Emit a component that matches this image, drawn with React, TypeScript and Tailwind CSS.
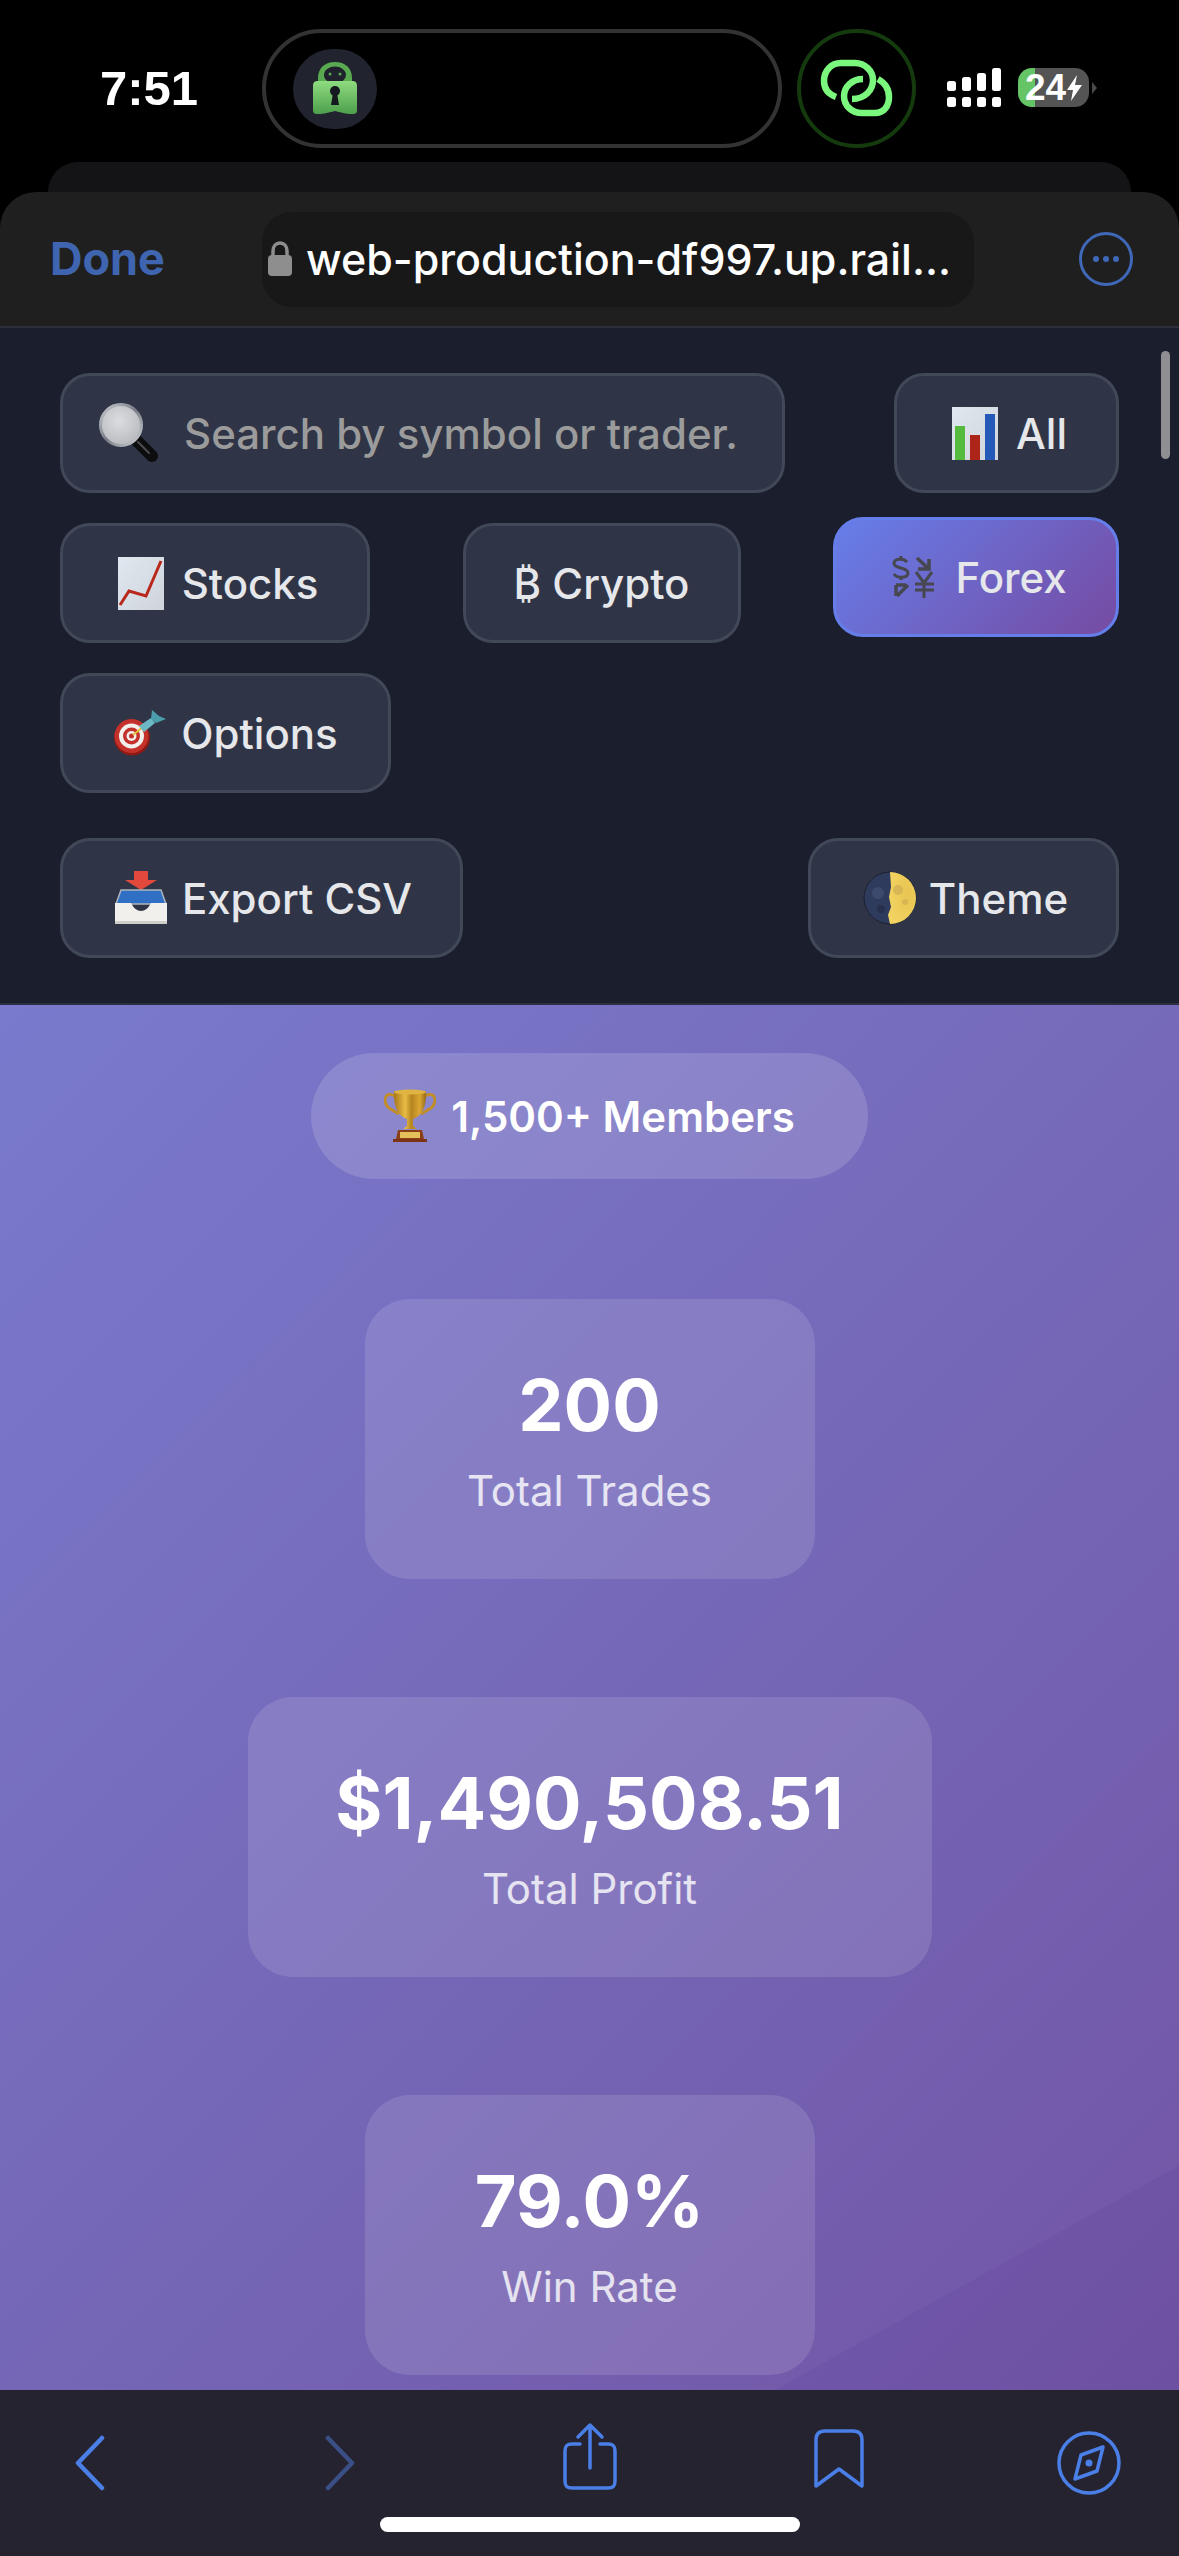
import React from "react";

const Magnifier = () => (
  <svg width="60" height="60" viewBox="0 0 60 60">
    <defs>
      <radialGradient id="lens" cx="0.45" cy="0.4" r="0.7"><stop offset="0" stopColor="#dcdde0" /><stop offset="1" stopColor="#b4b6bb" /></radialGradient>
      <linearGradient id="rim" x1="0" y1="0" x2="1" y2="1"><stop offset="0" stopColor="#c9ccd2" /><stop offset="0.5" stopColor="#777b84" /><stop offset="1" stopColor="#d5d7da" /></linearGradient>
    </defs>
    <line x1="38" y1="38" x2="53" y2="53" stroke="#0d0d0f" strokeWidth="12" strokeLinecap="round" />
    <line x1="39" y1="39" x2="50" y2="50" stroke="#4a4c52" strokeWidth="2" strokeLinecap="round" />
    <circle cx="22" cy="22" r="20.5" fill="url(#lens)" stroke="url(#rim)" strokeWidth="3" />
  </svg>
);

const ChartPaper = ({ children }: { children: React.ReactNode }) => (
  <svg width="46" height="53" viewBox="0 0 46 53">
    <defs>
      <linearGradient id="paper" x1="0" y1="0" x2="1" y2="1"><stop offset="0" stopColor="#dfe8f0" /><stop offset="1" stopColor="#cfd4da" /></linearGradient>
    </defs>
    <rect width="46" height="53" fill="url(#paper)" />
    {children}
  </svg>
);

const BarChart = () => (
  <ChartPaper>
    <rect x="3" y="19" width="10" height="34" fill="#55bb3e" />
    <rect x="18" y="28" width="10" height="25" fill="#ad2418" />
    <rect x="33" y="7" width="10" height="46" fill="#2459b8" />
  </ChartPaper>
);

const LineChart = () => (
  <ChartPaper>
    <path d="M2 48 L11 34 L28 39 L43 4" fill="none" stroke="#b8281b" strokeWidth="3" />
  </ChartPaper>
);

const ForexIcon = () => (
  <svg width="44" height="42" viewBox="0 0 44 42" fill="none" stroke="#47474f">
    <path d="M16 6 C13 2 3 2 3 7.500 C3 13 17 11 17 17 C17 22.500 6 22.500 3 18" strokeWidth="3" />
    <path d="M10 0 V4 M10 20 V24" strokeWidth="3" />
    <path d="M26 2 L38 13 M38 3 V13 H27" strokeWidth="3.500" />
    <path d="M6 40 L17 29 M5 29 H15 M5 29 V40" strokeWidth="3.500" />
    <path d="M25 16 L33 27 L41 16 M33 27 V42 M24 28 H43 M24 34 H43" strokeWidth="3" />
  </svg>
);

const Target = () => (
  <svg width="54" height="46" viewBox="0 0 54 46">
    <ellipse cx="19" cy="28" rx="18" ry="17.500" fill="#8f1a15" />
    <circle cx="18.500" cy="26" r="17" fill="#c4302a" />
    <circle cx="18.500" cy="26" r="12.500" fill="#f2efec" />
    <circle cx="18.500" cy="26" r="8.500" fill="#c4302a" />
    <circle cx="18.500" cy="26" r="5" fill="#f2efec" />
    <circle cx="18.500" cy="26" r="2.500" fill="#c4302a" />
    <path d="M20 25 L30 17" stroke="#e3c23a" strokeWidth="2" />
    <path d="M26 16 L38 8 L42 13 L31 22 Z" fill="#6cb8c4" />
    <path d="M38 9 L39 0 L46 6 L53 9 L43 13 Z" fill="#4b9dab" />
  </svg>
);

const Inbox = () => (
  <svg width="54" height="54" viewBox="0 0 54 54">
    <path d="M20 0 H34 V9 H43 L27 19 L11 9 H20 Z" fill="#e2483b" />
    <path d="M7 19 H47 L52 33 H2 Z" fill="#2f6fc4" stroke="#b0b5bb" strokeWidth="1.500" />
    <path d="M1 32 H17 Q21 40 27 40 Q33 40 37 32 H53 V52 H1 Z" fill="#f1f0ec" />
    <rect x="1" y="50" width="52" height="3" fill="#cfcfca" />
  </svg>
);

const Moon = () => (
  <svg width="54" height="54" viewBox="0 0 54 54">
    <defs>
      <radialGradient id="moonY" cx="0.7" cy="0.4" r="0.8"><stop offset="0" stopColor="#e8c552" /><stop offset="1" stopColor="#f3d463" /></radialGradient>
    </defs>
    <circle cx="27" cy="27" r="26" fill="#2f3b5c" stroke="#1c2130" strokeWidth="1" />
    <path d="M27 1 A26 26 0 0 1 27 53 L25 44 L28 36 L26 26 L28 16 Z" fill="url(#moonY)" />
    <circle cx="35" cy="19" r="5" fill="#cfae52" opacity="0.7" />
    <circle cx="42" cy="31" r="3" fill="#cfae52" opacity="0.7" />
    <circle cx="15" cy="22" r="6" fill="#3c4a6e" />
    <circle cx="18" cy="38" r="4" fill="#26304c" />
  </svg>
);

const Trophy = () => (
  <svg width="52" height="56" viewBox="0 0 52 56">
    <defs>
      <linearGradient id="gold" x1="0" x2="1" y1="0" y2="0"><stop offset="0" stopColor="#a8761a" /><stop offset="0.35" stopColor="#e8bc45" /><stop offset="0.55" stopColor="#b58420" /><stop offset="0.8" stopColor="#dba832" /><stop offset="1" stopColor="#96681a" /></linearGradient>
    </defs>
    <path d="M11 8 C-1 2 -1 16 5 20 L15 26 M41 8 C53 2 53 16 47 20 L37 26" fill="none" stroke="#c08d28" strokeWidth="3" />
    <path d="M10 3 H42 C43 18 38 28 29 31 V38 L33 41 H19 L23 38 V31 C14 28 9 18 10 3 Z" fill="url(#gold)" />
    <ellipse cx="26" cy="4" rx="16" ry="2.500" fill="#e0b443" />
    <path d="M14 42 H38 L40 51 H12 Z" fill="#8a3f17" />
    <rect x="16" y="44" width="20" height="6" fill="#e5bf5a" />
    <rect x="9" y="51" width="34" height="3" fill="#7c3415" />
  </svg>
);

const PiaLogo = () => (
  <svg width="44" height="54" viewBox="0 0 44 54">
    <defs>
      <linearGradient id="pia" x1="0" x2="0" y1="0" y2="1"><stop offset="0" stopColor="#8fdc80" /><stop offset="1" stopColor="#4d9f4c" /></linearGradient>
    </defs>
    <path d="M5 22 V16 C5 6 12 0 22 0 C32 0 39 6 39 16 V22 Z" fill="#59a950" />
    <ellipse cx="22" cy="13" rx="11" ry="8.500" fill="#1f222c" />
    <circle cx="17" cy="12" r="1.500" fill="#59a950" />
    <circle cx="27" cy="12" r="1.500" fill="#59a950" />
    <path d="M0 24 C0 20 2 19 5 19 H39 C42 19 44 20 44 24 V48 C44 52 42 52 38 52 C33 52 30 51 22 49 C14 51 11 52 6 52 C2 52 0 52 0 48 Z" fill="url(#pia)" />
    <circle cx="22" cy="29" r="5" fill="#15181f" />
    <path d="M20 31 L18 43 H26 L24 31 Z" fill="#15181f" />
  </svg>
);

const ChainLogo = () => (
  <div className="flex h-[119px] w-[119px] items-center justify-center rounded-full border-[4px] border-[#143a0e]">
    <svg width="111" height="111" viewBox="4 4 111 111" fill="none" stroke="#7bf77e" strokeWidth="6.500" strokeLinecap="butt">
      <path d="M39 68 C31 65 27 59 27 52 C27 42 34 34 44 34 H58 C68 34 76 42 76 51 C76 61 68 70 55 70" />
      <path d="M66 50 C55 50 47 58 47 67 C47 77 55 84 65 84 H78 C87 84 92 77 92 68 C92 60 88 54 81 50" />
    </svg>
  </div>
);

const Signal = () => (
  <svg width="55" height="40" viewBox="0 0 55 40" fill="#fff">
    <rect x="0" y="13" width="9" height="10" rx="2.500" />
    <rect x="15" y="9" width="9" height="14" rx="2.500" />
    <rect x="30" y="5" width="9" height="18" rx="2.500" />
    <rect x="45" y="0" width="9" height="23" rx="2.500" />
    <rect x="0" y="29" width="9" height="10" rx="2.500" />
    <rect x="15" y="29" width="9" height="10" rx="2.500" />
    <rect x="30" y="29" width="9" height="10" rx="2.500" />
    <rect x="45" y="29" width="9" height="10" rx="2.500" />
  </svg>
);

const Filter = ({ w, icon, label, active, gap = "gap-[12px]", shift = "" }: { w: string; icon: React.ReactNode; label: string; active?: boolean; gap?: string; shift?: string }) => (
  <div
    className={`flex h-[120px] ${w} items-center justify-center ${gap} ${shift} rounded-[30px] border-[3px] text-[42px] font-medium ${
      active
        ? "-translate-y-[6px] border-[#667eea] bg-[linear-gradient(135deg,#667eea_0%,#764ba2_100%)] text-[#e5e7eb]"
        : "border-[#414858] bg-[#2f3546] text-[#e5e7eb]"
    }`}
  >
    {icon}
    <span>{label}</span>
  </div>
);

const Stat = ({ w, value, label }: { w: string; value: string; label: string }) => (
  <div className={`flex h-[280px] ${w} flex-col items-center justify-center rounded-[45px] bg-white/12`}>
    <div className="text-[72px] leading-[86px] font-bold text-white">{value}</div>
    <div className="mt-[17px] text-[42px] leading-[52px] text-white/80">{label}</div>
  </div>
);

export default function App() {
  return (
    <div className="relative flex h-[2556px] w-[1179px] flex-col overflow-hidden bg-black font-[Inter,sans-serif] text-white">
      {/* status bar */}
      <div className="flex h-[162px] items-start pt-[29px]">
        <div className="ml-[100px] flex h-[119px] w-[162px] items-center font-[Liberation_Sans,sans-serif] text-[49px] font-bold">7:51</div>
        <div className="flex h-[119px] w-[520px] items-center rounded-[60px] border-[4px] border-[#333333] pl-[27px]">
          <div className="flex h-[80px] w-[84px] items-center justify-center rounded-[40px] bg-[#21242e]">
            <PiaLogo />
          </div>
        </div>
        <div className="ml-[15px]"><ChainLogo /></div>
        <div className="ml-[31px] mt-[39px]"><Signal /></div>
        <div className="ml-[16px] mt-[39px] flex items-center">
          <div className="flex h-[39px] w-[71px] items-center justify-center gap-[1px] rounded-[14px] bg-[linear-gradient(90deg,#65c466_24%,#545454_24%)] font-[Liberation_Sans,sans-serif] text-[37px] leading-none font-bold">
            <span>24</span>
            <svg width="15" height="26" viewBox="0 0 15 26" fill="#fff"><path d="M10 0 L0 15 H6 L4 26 L15 10 H8 Z" /></svg>
          </div>
          <svg className="ml-[3px]" width="5" height="12" viewBox="0 0 5 12" fill="#4a4a4a"><path d="M0 0 L5 6 L0 12 Z" /></svg>
        </div>
      </div>

      {/* sheet behind */}
      <div className="mx-[48px] h-[30px] rounded-t-[30px] bg-[#141416]" />

      {/* browser header */}
      <div className="flex h-[136px] items-center rounded-t-[36px] border-b-[2px] border-[#2c2f3a] bg-[#1f1f1f] pl-[50px]">
        <div className="w-[212px] text-[45px] font-bold text-[#3f65b0]">Done</div>
        <div className="flex h-[95px] w-[712px] items-center gap-[12px] rounded-[30px] bg-[#181818] pl-[4px]">
          <svg width="28" height="36" viewBox="0 0 26 36" fill="#8e8e8e">
            <path d="M6 15 V10 C6 5 9 2 13 2 C17 2 20 5 20 10 V15" fill="none" stroke="#8e8e8e" strokeWidth="3.500" />
            <rect x="1" y="14" width="24" height="21" rx="4" />
          </svg>
          <span className="text-[43px] font-medium whitespace-nowrap text-white">web-production-df997.up.rail...</span>
        </div>
        <div className="ml-[105px] flex h-[54px] w-[54px] items-center justify-center gap-[4px] rounded-full border-[3px] border-[#3f68b8]">
          <i className="h-[6px] w-[6px] rounded-full bg-[#3f68b8]" />
          <i className="h-[6px] w-[6px] rounded-full bg-[#3f68b8]" />
          <i className="h-[6px] w-[6px] rounded-full bg-[#3f68b8]" />
        </div>
      </div>

      {/* filter panel */}
      <div className="flex h-[675px] flex-col bg-[#1a1e2d] px-[60px] pt-[45px]">
        <div className="flex justify-between">
          <div className="flex h-[120px] w-[725px] items-center gap-[25px] rounded-[30px] border-[3px] border-[#414858] bg-[#2f3546] pl-[36px] text-[42px] font-medium text-[#9b9b9b]">
            <Magnifier />
            <span className="whitespace-nowrap">Search by symbol or trader.</span>
          </div>
          <Filter w="w-[225px]" icon={<BarChart />} label="All" gap="gap-[18px]" shift="pl-[6px]" />
        </div>
        <div className="mt-[30px] flex justify-between">
          <Filter w="w-[310px]" icon={<LineChart />} label="Stocks" gap="gap-[18px]" shift="pl-[6px]" />
          <Filter w="w-[278px]" icon={null} label="₿ Crypto" />
          <Filter w="w-[286px]" icon={<ForexIcon />} label="Forex" gap="gap-[20px]" shift="pl-[6px]" active />
        </div>
        <div className="mt-[30px] flex">
          <Filter w="w-[331px]" icon={<Target />} label="Options" gap="gap-[14px]" />
        </div>
        <div className="mt-[45px] flex justify-between">
          <Filter w="w-[403px]" icon={<Inbox />} label="Export CSV" gap="gap-[14px]" shift="pl-[3px]" />
          <Filter w="w-[311px]" icon={<Moon />} label="Theme" gap="gap-[12px]" shift="pl-[4px]" />
        </div>
      </div>

      {/* stats */}
      <div className="flex flex-1 flex-col items-center border-t-[2px] border-[#2c3040] bg-[linear-gradient(151deg,rgba(255,255,255,0.03)_0%,rgba(255,255,255,0.03)_89%,transparent_89%),linear-gradient(135deg,#7576cb_0%,#6e50a2_100%)] pt-[48px]">
        <div className="flex h-[126px] w-[557px] items-center justify-center gap-[15px] rounded-[63px] bg-white/15 text-[42px] font-semibold">
          <Trophy />
          <span>1,500+ Members</span>
        </div>
        <div className="mt-[120px] flex flex-col items-center gap-[118px]">
          <Stat w="w-[450px]" value="200" label="Total Trades" />
          <Stat w="w-[684px]" value="$1,490,508.51" label="Total Profit" />
          <Stat w="w-[450px]" value="79.0%" label="Win Rate" />
        </div>
      </div>

      {/* toolbar */}
      <div className="flex h-[166px] flex-col bg-[#252330]">
        <div className="flex h-[127px] items-start justify-between px-[40px] pt-[40px] text-[#4a7fe8]">
          <div className="flex h-[66px] w-[100px] items-center justify-center">
            <svg width="32" height="56" viewBox="0 0 32 56" fill="none" stroke="currentColor" strokeWidth="4.500" strokeLinecap="round" strokeLinejoin="round"><path d="M28 3 L4 28 L28 53" /></svg>
          </div>
          <div className="flex h-[66px] w-[100px] items-center justify-center text-[#3a4f86]">
            <svg width="32" height="56" viewBox="0 0 32 56" fill="none" stroke="currentColor" strokeWidth="4.500" strokeLinecap="round" strokeLinejoin="round"><path d="M4 3 L28 28 L4 53" /></svg>
          </div>
          <div className="-mt-[9px] flex h-[70px] w-[100px] items-center justify-center">
            <svg width="54" height="68" viewBox="0 0 54 68" fill="none" stroke="currentColor" strokeWidth="3.500" strokeLinecap="round" strokeLinejoin="round"><path d="M17 22 H9 C4 22 2 24 2 29 V59 C2 64 4 66 9 66 H45 C50 66 52 64 52 59 V29 C52 24 50 22 45 22 H37" /><path d="M27 46 V3 M15 15 L27 3 L39 15" /></svg>
          </div>
          <div className="-mt-[2px] flex h-[62px] w-[100px] items-center justify-center">
            <svg width="52" height="60" viewBox="0 0 52 60" fill="none" stroke="currentColor" strokeWidth="3.500" strokeLinecap="round" strokeLinejoin="round"><path d="M3 57 V11 C3 5 6 2 12 2 H40 C46 2 49 5 49 11 V57 L26 40 Z" /></svg>
          </div>
          <div className="flex h-[66px] w-[100px] items-center justify-center">
            <svg width="64" height="64" viewBox="0 0 64 64" fill="none" stroke="currentColor" strokeWidth="3.500" strokeLinejoin="round"><circle cx="32" cy="32" r="30" /><path d="M46 16 L40 40 L18 48 L24 24 Z" /><circle cx="32" cy="32" r="3.500" fill="currentColor" stroke="none" /></svg>
          </div>
        </div>
        <div className="mx-auto h-[15px] w-[420px] rounded-full bg-white" />
      </div>

      {/* scrollbar overlay */}
      <div className="absolute top-[351px] left-[1161px] h-[108px] w-[9px] rounded-full bg-[#8e8e93]" />
    </div>
  );
}
